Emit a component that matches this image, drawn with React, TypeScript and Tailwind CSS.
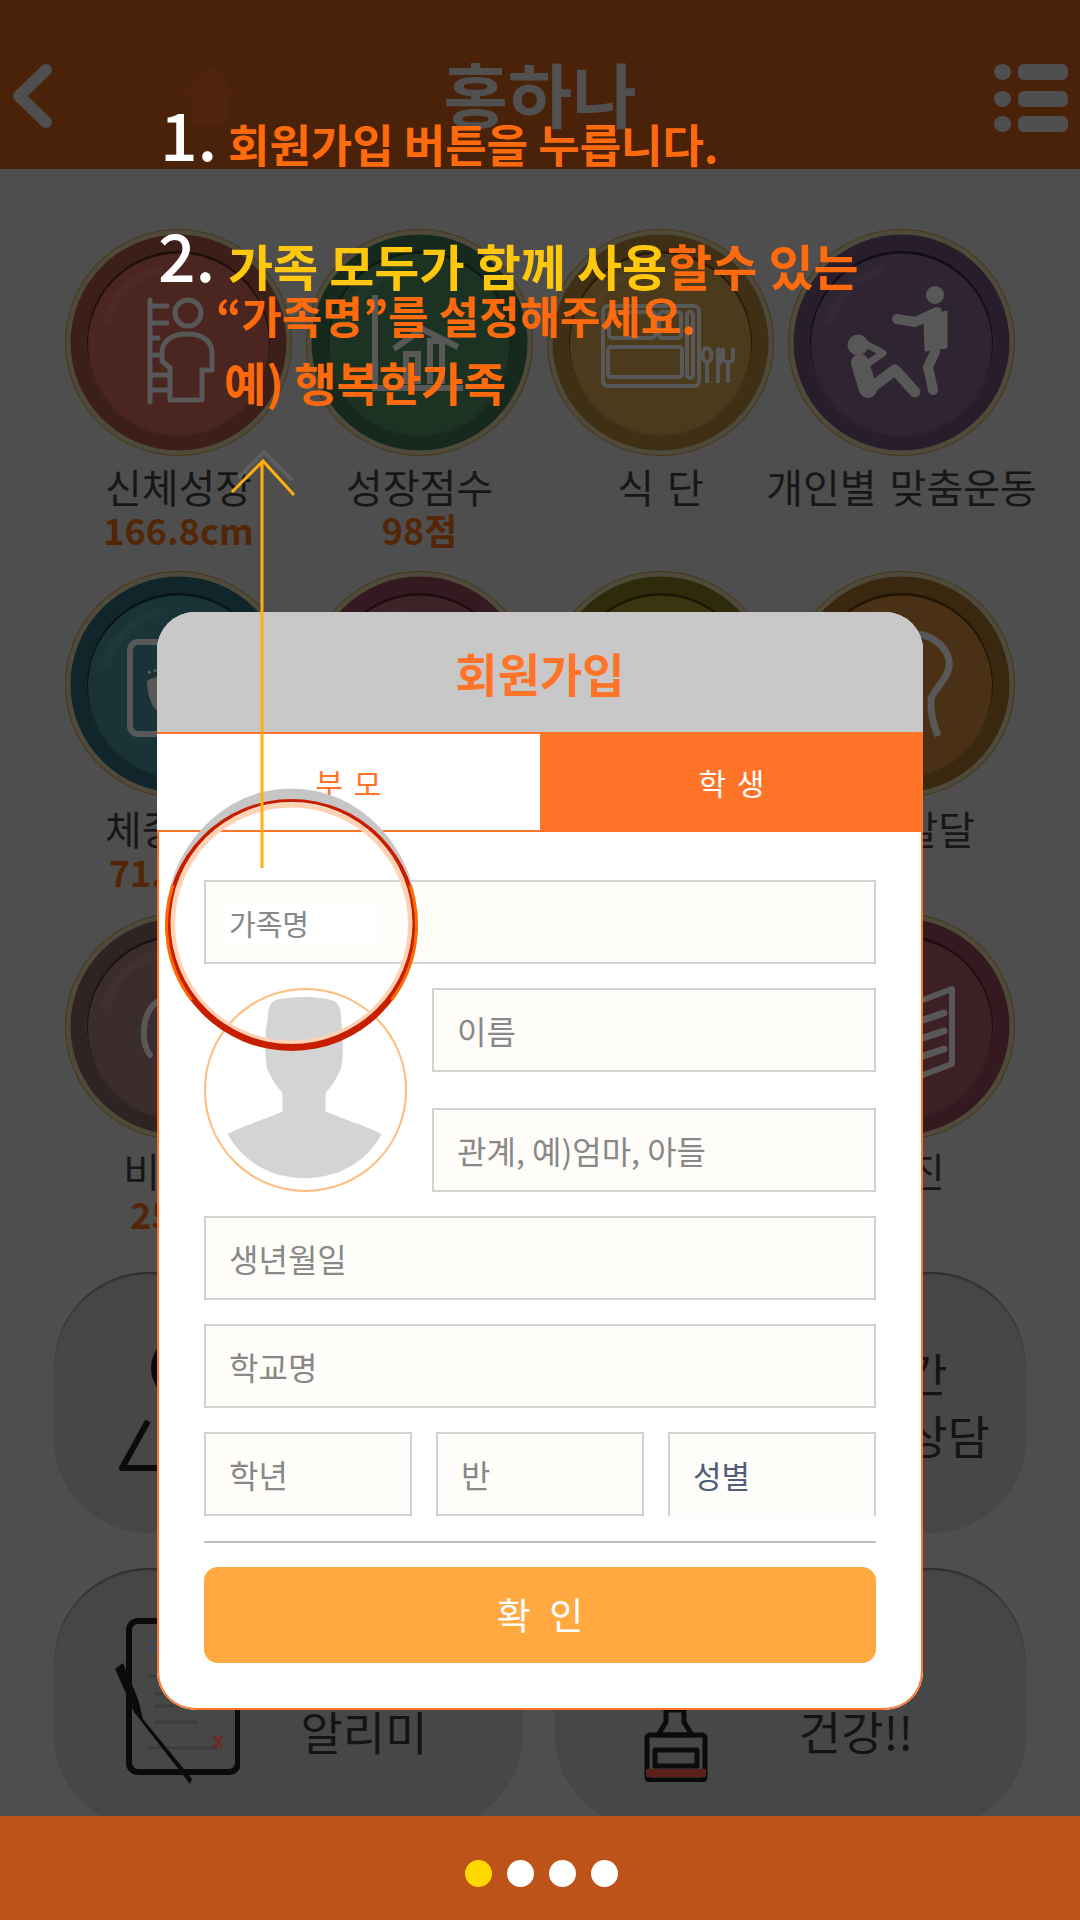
import type { ReactNode } from "react";

const stroke = "#585858";

function Medal({ rim, disc, line, children }: { rim: string; disc: string; line: string; children?: ReactNode }) {
  return (
    <svg viewBox="0 0 227 227" className="w-[227px] h-[227px] shrink-0">
      <circle cx="113.5" cy="113.5" r="113.5" fill="#473718" />
      <circle cx="113.5" cy="113.5" r="112.5" fill="#4f4b3c" />
      <circle cx="113.5" cy="113.5" r="108" fill={rim} />
      <circle cx="113.5" cy="115" r="92" fill="#fff" fillOpacity="0.04" />
      <circle cx="113.5" cy="113.5" r="91.5" fill={line} />
      <circle cx="113.5" cy="115" r="90.5" fill={disc} />
      <path d="M40 96 A76 76 0 0 1 96 40" fill="none" stroke="#fff" strokeOpacity="0.025" strokeWidth="8" />
      {children}
    </svg>
  );
}

function HeightIcon() {
  return (
    <g fill="none" stroke={stroke} strokeWidth="5" strokeLinecap="round" strokeLinejoin="round">
      <path d="M85 71V173M85 77H102M85 94H102M85 109H93M85 126H93M85 146H102M85 161H102" />
      <circle cx="123" cy="84" r="13" />
      <path d="M105 171V139L97 132V124C97 111 108 105 122 105C136 105 147 111 147 124V141H137V171Z" />
    </g>
  );
}

function ChartIcon() {
  return (
    <g fill="none" stroke={stroke} strokeWidth="6">
      <path d="M69 66V159H157" />
      <path d="M88 120L116 100L152 118" />
      <path d="M100 155V125H112V155M124 155V112H136V155" />
    </g>
  );
}

function TrayIcon() {
  return (
    <g fill="none" stroke={stroke} strokeWidth="4" strokeLinejoin="round">
      <rect x="56" y="77" width="96" height="80" rx="5" />
      <rect x="62" y="83" width="46" height="26" rx="3" />
      <rect x="112" y="83" width="22" height="26" rx="3" />
      <rect x="61" y="118" width="74" height="30" rx="3" />
      <rect x="140" y="83" width="6" height="66" rx="3" />
      <path d="M160 134V154" />
      <ellipse cx="160" cy="126" rx="4.5" ry="7" />
      <path d="M171 154V120C175 124 175 134 171 136" />
      <path d="M181 154V134M176 119V130C176 134 186 134 186 130V119" />
    </g>
  );
}

function WorkoutIcon() {
  return (
    <g fill={stroke} stroke={stroke} strokeLinecap="round" strokeLinejoin="round">
      <circle cx="147" cy="66" r="9" stroke="none" />
      <path d="M137 92L158 83V118L138 121Z" strokeWidth="3" />
      <path d="M109 90L127 93L149 83" fill="none" strokeWidth="10" />
      <path d="M147 123L140 138L145 161" fill="none" strokeWidth="10" />
      <circle cx="70" cy="116" r="10" />
      <path d="M72 134L80 160" fill="none" strokeWidth="18" />
      <path d="M84 158L107 141L127 163" fill="none" strokeWidth="11" />
      <path d="M72 112L95 124L78 136" fill="none" strokeWidth="7" />
    </g>
  );
}

function FootIcon() {
  return (
    <g fill="none" stroke={stroke} strokeWidth="6">
      <rect x="65" y="71" width="96" height="92" rx="8" />
      <path d="M82 110C90 104 104 104 110 112C110 125 104 140 96 142C88 140 82 125 82 110Z" fill={stroke} stroke="none" />
      <path d="M83 102L88 100L93 99L98 98" stroke={stroke} strokeWidth="3" strokeDasharray="3 3" />
    </g>
  );
}

function BrainIcon() {
  return (
    <path
      d="M120 62C150 62 166 84 160 100C156 112 146 118 143 128C142 140 146 155 150 165"
      fill="none"
      stroke={stroke}
      strokeWidth="7"
    />
  );
}

function EarIcon() {
  return <path d="M92 89C76 100 76 130 85 142" fill="none" stroke={stroke} strokeWidth="6" strokeLinecap="round" />;
}

function DocIcon() {
  return (
    <g fill="none" stroke={stroke} strokeWidth="6" strokeLinejoin="round">
      <path d="M100 100L164 76V151L100 175Z" />
      <path d="M120 112L156 100M120 130L156 118M120 148L156 136" strokeWidth="7" strokeLinecap="round" />
    </g>
  );
}

const tiles = [
  { label: "신체성장", value: "166.8cm", rim: "#3d1f1a", disc: "#4b251f", line: "#1f0f0b", icon: <HeightIcon /> },
  { label: "성장점수", value: "98점", rim: "#17281d", disc: "#1c3324", line: "#0c1a10", icon: <ChartIcon /> },
  { label: "식 단", value: "", rim: "#3f2f15", disc: "#4b3a1b", line: "#261a08", icon: <TrayIcon /> },
  { label: "개인별 맞춤운동", value: "", rim: "#281d2b", disc: "#2f2431", line: "#140c14", icon: <WorkoutIcon /> },
  { label: "체중변화", value: "71.55kg", rim: "#11262a", disc: "#1a3337", line: "#081416", icon: <FootIcon /> },
  { label: "근력운동", value: "", rim: "#341a20", disc: "#3d2328", line: "#1e0c10", icon: null },
  { label: "수면관리", value: "", rim: "#2e2a0c", disc: "#3a3510", line: "#1a1704", icon: null },
  { label: "두뇌발달", value: "", rim: "#3a2710", disc: "#4a3115", line: "#221404", icon: <BrainIcon /> },
  { label: "비만도", value: "25.15", rim: "#302324", disc: "#3b2d2e", line: "#1c1112", icon: <EarIcon /> },
  { label: "심리상태", value: "", rim: "#341a20", disc: "#3d2328", line: "#1e0c10", icon: null },
  { label: "생활습관", value: "", rim: "#2e2a0c", disc: "#3a3510", line: "#1a1704", icon: null },
  { label: "문 진", value: "", rim: "#341a20", disc: "#3d2025", line: "#1e0c10", icon: <DocIcon /> },
];

function Field({ placeholder, className = "" }: { placeholder?: string; className?: string }) {
  return (
    <input
      placeholder={placeholder}
      className={`h-[84px] min-w-0 bg-[#fffdf9] border-2 border-[#d2d2d2] pl-[23px] text-[32px] placeholder:text-[#888888] ${className}`}
    />
  );
}

function Card({ children, className = "" }: { children: ReactNode; className?: string }) {
  return (
    <div
      className={`h-[261px] rounded-[95px] bg-[#474747] shadow-[inset_0_3px_2px_-1px_#2c2c2c] flex items-center justify-between ${className}`}
    >
      {children}
    </div>
  );
}

export default function App() {
  return (
    <div className="relative w-[1080px] h-[1920px] overflow-hidden flex flex-col bg-[#4e4e4e] font-['Noto_Sans_CJK_KR','Noto_Sans',sans-serif]">
      {/* 상단 헤더 */}
      <header className="h-[169px] shrink-0 bg-[#4a220a] relative flex items-start justify-between pt-[64px] pl-[12px] pr-[12px]">
        <svg viewBox="0 0 40 64" className="w-[40px] h-[64px]">
          <path d="M34 6L7 32L34 58" fill="none" stroke="#4f4f4f" strokeWidth="12" strokeLinecap="round" strokeLinejoin="round" />
        </svg>
        <svg viewBox="0 0 56 62" className="absolute left-[182px] top-[64px] w-[56px] h-[62px]">
          <path d="M28 1L55 30H47V61H9V30H1Z" fill="#4f240c" />
        </svg>
        <h1 className="absolute left-0 right-0 top-[43px] text-center text-[70px] leading-[100px] font-bold text-[#505050]">홍하나</h1>
        <svg viewBox="0 0 74 68" className="w-[74px] h-[68px]">
          <g fill="#4f4f4f">
            <ellipse cx="8.5" cy="8" rx="8.5" ry="8" />
            <ellipse cx="8.5" cy="35" rx="8.5" ry="8" />
            <ellipse cx="8.5" cy="60" rx="8.5" ry="8" />
            <rect x="24" y="0" width="50" height="16" rx="6" />
            <rect x="24" y="27" width="50" height="16" rx="6" />
            <rect x="24" y="52" width="50" height="16" rx="6" />
          </g>
        </svg>
      </header>

      {/* 메뉴 */}
      <main className="flex-1 min-h-0 overflow-hidden pt-[60px]">
        <div className="grid grid-cols-[repeat(4,241px)] auto-rows-[342px] pl-[58px]">
          {tiles.map((t) => (
            <div key={t.label} className="flex flex-col items-center">
              <Medal rim={t.rim} disc={t.disc} line={t.line}>
                {t.icon}
              </Medal>
              <div className="mt-[9px] text-[40px] leading-[43px] text-[#171717] whitespace-nowrap [word-spacing:4px]">{t.label}</div>
              <div className="text-[36px] leading-[43px] font-bold text-[#532608]">{t.value}</div>
            </div>
          ))}
        </div>

        <div className="grid grid-cols-[469px_471px] gap-x-[32px] gap-y-[35px] pl-[54px] mt-[17px] text-[46px] leading-[62px] text-[#141414] text-center">
          <Card className="pl-[64px]">
            <svg viewBox="0 0 100 120" className="w-[100px] h-[120px] shrink-0 mt-[20px] overflow-visible">
              <g fill="none" stroke="#0b0b0b" strokeWidth="6" strokeLinejoin="round">
                <circle cx="66" cy="15" r="30" />
                <path d="M30 68L4 115H100" />
              </g>
            </svg>
            <div className="w-[280px]">
              선생님과
              <br />
              상담하기
            </div>
          </Card>
          <Card className="pl-[80px]">
            <div className="w-[80px]" />
            <div className="w-[284px]">
              실시간
              <br />
              전문가상담
            </div>
          </Card>
          <Card className="pl-[56px] pr-[39px]">
            <svg viewBox="0 0 130 170" className="w-[130px] h-[170px] shrink-0">
              <rect x="19" y="7" width="109" height="151" rx="9" fill="none" stroke="#0b0b0b" strokeWidth="6" />
              <path d="M38 27H56M38 34H56" stroke="#3b4a5e" strokeWidth="3" />
              <path d="M38 62H80M44 80H100M44 92H108M44 108H88M38 134H108" stroke="#3e3e3e" strokeWidth="3" />
              <path d="M104 122L112 134M112 122L104 134" stroke="#6b2a22" strokeWidth="3" />
              <path d="M5 55L13 49L28 85L33 105L82 165L80 170L24 98L18 84Z" fill="#0b0b0b" />
            </svg>
            <div className="w-[240px]">
              오늘의
              <br />
              알리미
            </div>
          </Card>
          <Card className="pl-[85px] pr-[40px]">
            <svg viewBox="0 0 70 90" className="w-[70px] h-[90px] shrink-0 mt-[76px]">
              <g fill="none" stroke="#0b0b0b" strokeWidth="5" strokeLinejoin="round">
                <path d="M26 18H44V30L52 43H18L26 30Z" />
                <rect x="7" y="43" width="58" height="45" rx="3" />
                <rect x="15" y="58" width="42" height="16" />
              </g>
              <rect x="6" y="77" width="60" height="8" fill="#5b1e1a" />
            </svg>
            <div className="w-[260px]">
              우리집
              <br />
              건강!!
            </div>
          </Card>
        </div>
      </main>

      {/* 하단 페이지 표시 */}
      <footer className="relative h-[104px] shrink-0 bg-[#bd5319] flex items-center justify-center gap-[15px] pt-[10px] pl-[2px]">
        <span className="w-[27px] h-[27px] rounded-full bg-[#ffd800]" />
        <span className="w-[27px] h-[27px] rounded-full bg-white" />
        <span className="w-[27px] h-[27px] rounded-full bg-white" />
        <span className="w-[27px] h-[27px] rounded-full bg-white" />
      </footer>

      {/* 회원가입 팝업 */}
      <section className="absolute left-[157px] top-[612px] w-[766px] h-[1098px] rounded-[38px] overflow-hidden flex flex-col bg-white">
        <h2 className="h-[120px] shrink-0 bg-[#c8c8c8] flex items-center justify-center text-[46px] font-bold text-[#ff7428]">회원가입</h2>
        <div className="flex-1 min-h-0 flex flex-col border-x-2 border-b-2 border-[#ff7428] rounded-b-[38px]">
          <div className="h-[100px] shrink-0 -mx-[2px] grid grid-cols-2 text-[30px] [word-spacing:4px]">
            <div className="flex items-center justify-center border-y-2 border-[#ff7428] text-[#ff7428] bg-white">부 모</div>
            <div className="flex items-center justify-center bg-[#ff7428] text-white">학 생</div>
          </div>
          <div className="flex flex-col px-[45px] pt-[48px]">
            <div className="relative flex">
              <Field className="w-full" />
              <div className="absolute left-[21px] top-[24px] w-[151px] h-[39px] bg-white flex items-center pl-[4px] text-[29px] text-[#888888]">가족명</div>
            </div>
            <div className="flex gap-[25px] mt-[24px]">
              <div className="w-[203px] h-[204px] shrink-0 rounded-full border-2 border-[#ffbc7a] overflow-hidden">
                <svg viewBox="0 0 203 204" className="w-full h-full">
                  <path
                    d="M72 10C90 6 115 6 130 11C137 14 138 22 138 32C140 50 140 72 138 79C134 90 128 98 122 105V124C140 132 162 138 179 147C165 175 135 192 101 192C67 192 37 175 22 147C39 138 60 132 78 124V105C72 98 66 90 62 79C60 65 60 40 63 30C63 18 65 13 72 10Z"
                    fill="#d4d4d4"
                  />
                </svg>
              </div>
              <div className="flex-1 flex flex-col gap-[36px]">
                <Field placeholder="이름" />
                <Field placeholder="관계, 예)엄마, 아들" />
              </div>
            </div>
            <Field placeholder="생년월일" className="mt-[24px]" />
            <Field placeholder="학교명" className="mt-[24px]" />
            <div className="grid grid-cols-3 gap-[24px] mt-[24px]">
              <Field placeholder="학년" />
              <Field placeholder="반" />
              <select className="h-[84px] min-w-0 appearance-none bg-[#fffdf9] border-2 border-b-0 border-[#d2d2d2] pl-[23px] text-[31px] text-[#4f5c7c]">
                <option>성별</option>
              </select>
            </div>
            <div className="h-[2px] bg-[#bdbdbd] mt-[25px]" />
            <button className="h-[96px] mt-[24px] rounded-[14px] bg-[#ffa940] text-white text-[37px] [word-spacing:10px]">확 인</button>
          </div>
        </div>
      </section>

      {/* 돋보기 강조 + 화살표 */}
      <svg viewBox="150 450 290 610" className="absolute left-[150px] top-[450px] w-[290px] h-[610px] pointer-events-none">
        <path d="M238 478L264 452L292 480" fill="none" stroke="#5e5e5e" strokeWidth="4" />
        <path d="M165 925A126 136 0 0 1 418 925A126 125 0 0 0 165 925Z" fill="#c6c6c6" />
        <circle cx="291.5" cy="924" r="119" fill="none" stroke="#ffd2b4" strokeWidth="5" />
        <path
          fillRule="evenodd"
          d="M165.5 925A126 126 0 0 1 417.5 925A126 126 0 0 1 165.5 925ZM170.5 923A121 121 0 0 0 412.5 923A121 121 0 0 0 170.5 923Z"
          fill="#c81e00"
        />
        <path d="M173 885A125 125 0 0 0 191.5 1000" fill="none" stroke="#ff6a00" strokeWidth="3" />
        <path d="M410 885A125 125 0 0 1 391.5 1000" fill="none" stroke="#ff6a00" strokeWidth="3" />
        <path d="M262 868V461M232 492L263 461L294 495" fill="none" stroke="#ffb010" strokeWidth="3" />
      </svg>

      {/* 안내 문구 */}
      <div className="absolute left-[160px] top-[86px] text-[66px] leading-[92px] text-white font-medium">1.</div>
      <div className="absolute left-[228px] top-[112px] text-[45px] leading-[64px] font-bold text-[#ff6a0c] whitespace-nowrap">회원가입 버튼을 누릅니다.</div>
      <div className="absolute left-[158px] top-[207px] text-[66px] leading-[92px] text-white font-medium">2.</div>
      <div className="absolute left-[228px] top-[232px] text-[49px] leading-[66px] font-bold text-[#ff6a0c] whitespace-nowrap">
        <span className="text-[#ffc80c]">가족 모두가 함께 사용</span>할수 있는
      </div>
      <div className="absolute left-[216px] top-[283px] text-[44px] leading-[64px] font-bold text-[#ff6a0c] whitespace-nowrap">“가족명”를 설정해주세요.</div>
      <div className="absolute left-[224px] top-[349px] text-[46px] leading-[64px] font-bold text-[#ff6a0c] whitespace-nowrap">예) 행복한가족</div>
    </div>
  );
}
